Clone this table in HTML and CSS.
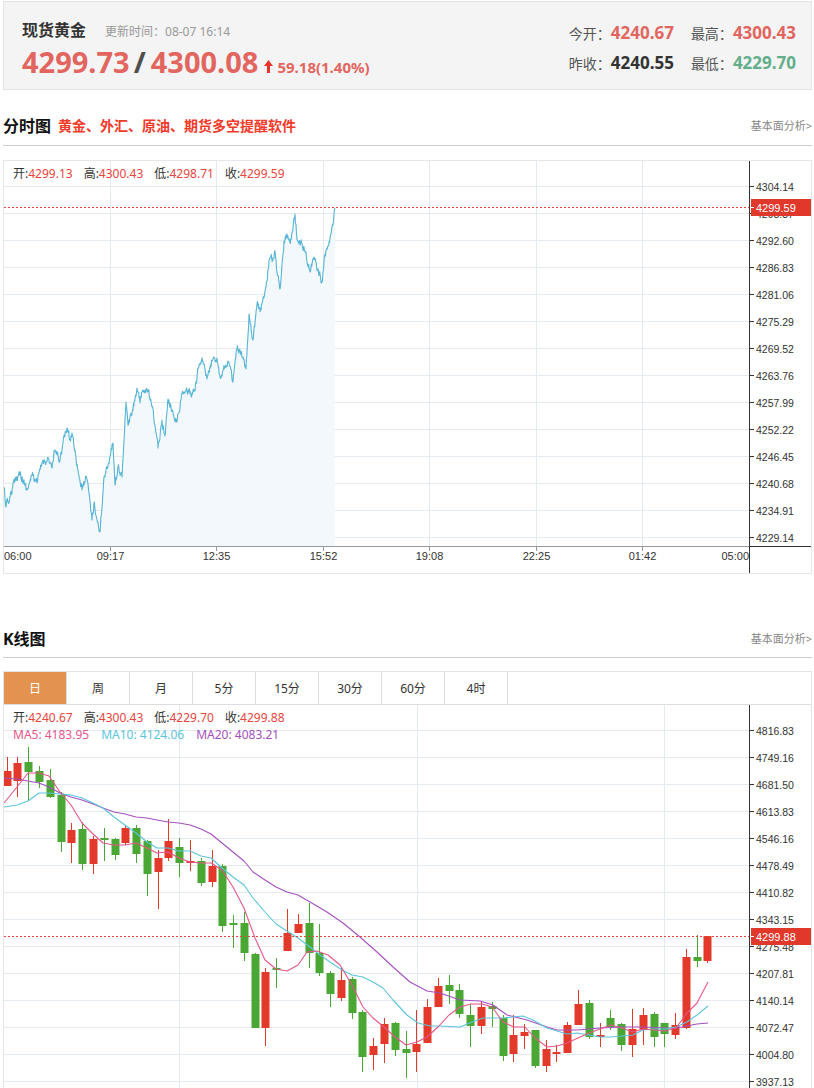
FILE: index.html
```html
<!DOCTYPE html>
<html lang="zh-CN">
<head>
<meta charset="utf-8">
<title>现货黄金</title>
<link rel="stylesheet" href="styles.css">
</head>
<body>
<div class="quote">
  <div class="q-left">
    <div class="q-title"><span class="name">现货黄金</span><span class="time">更新时间：08-07 16:14</span></div>
    <div class="q-price">
      <span class="big up">4299.73</span><span class="slash">/</span><span class="big up">4300.08</span>
      <svg class="arrow" width="9" height="13" viewBox="0 0 9 13"><polygon points="4.5,0 9,6 6,6 6,13 3,13 3,6 0,6"/></svg>
      <span class="chg">59.18(1.40%)</span>
    </div>
  </div>
  <div class="q-right">
    <div class="stat"><span class="lbl">今开：</span><span class="val up">4240.67</span></div>
    <div class="stat"><span class="lbl">最高：</span><span class="val up">4300.43</span></div>
    <div class="stat"><span class="lbl">昨收：</span><span class="val flat">4240.55</span></div>
    <div class="stat"><span class="lbl">最低：</span><span class="val dn">4229.70</span></div>
  </div>
</div>

<div class="sec-head first">
  <span class="sec-title">分时图</span><span class="sec-ad">黄金、外汇、原油、期货多空提醒软件</span><span class="sec-more">基本面分析&gt;</span>
</div>
<div class="tbox">
  <svg id="tchart" class="chart" width="807" height="412" viewBox="4 161 807 412"></svg>
  <div class="info">
    <span class="k">开:</span><span class="v">4299.13</span><span class="k">高:</span><span class="v">4300.43</span><span class="k">低:</span><span class="v">4298.71</span><span class="k">收:</span><span class="v">4299.59</span>
  </div>
</div>

<div class="sec-head second">
  <span class="sec-title">K线图</span><span class="sec-more">基本面分析&gt;</span>
</div>
<div class="kbox">
  <div class="tabs">
    <div class="tab on">日</div>
    <div class="tab">周</div>
    <div class="tab">月</div>
    <div class="tab">5分</div>
    <div class="tab">15分</div>
    <div class="tab">30分</div>
    <div class="tab">60分</div>
    <div class="tab">4时</div>
  </div>
  <div class="kchart">
    <svg id="kchart" class="chart" width="807" height="390" viewBox="4 705 807 390"></svg>
    <div class="info kinfo">
      <div><span class="k">开:</span><span class="v">4240.67</span><span class="k">高:</span><span class="v">4300.43</span><span class="k">低:</span><span class="v">4229.70</span><span class="k">收:</span><span class="v">4299.88</span></div>
      <div><span class="ma5">MA5: 4183.95</span><span class="ma10">MA10: 4124.06</span><span class="ma20">MA20: 4083.21</span></div>
    </div>
  </div>
</div>
<script src="script.js"></script>
</body>
</html>
```

FILE: styles.css
```css
* { box-sizing: border-box; }
html, body { margin: 0; padding: 0; }
body {
  width: 814px;
  background: #fff;
  color: #333;
  font-family: "Noto Sans", "Noto Sans CJK SC", sans-serif;
}

/* quote header */
.quote {
  margin: 1px 2px 0 3px;
  height: 89px;
  background: #f4f4f4;
  border: 1px solid #e4e4e4;
  display: flex;
  justify-content: space-between;
  padding: 0 15px 0 18px;
}
.q-left { padding-top: 16px; }
.q-title { display: flex; align-items: baseline; height: 24px; line-height: 24px; }
.name { font-size: 16px; font-weight: 700; color: #333; }
.time { font-size: 12px; color: #999; margin-left: 19px; }
.q-price { display: flex; align-items: baseline; line-height: 36px; margin-top: 2px; }
.big { font-size: 29px; font-weight: 700; }
.slash { font-size: 29px; font-weight: 700; color: #4f4f4f; margin: 0 5px 0 4px; }
.arrow { fill: #e8332a; margin: 0 4px 0 6px; }
.chg { font-size: 15px; font-weight: 700; color: #e2665f; }
.up { color: #e2665f; }
.dn { color: #64ae8c; }
.flat { color: #333; }

.q-right {
  display: grid;
  grid-template-columns: auto auto;
  grid-auto-rows: 30px;
  column-gap: 17px;
  align-items: center;
  padding-top: 15px;
}
.stat { white-space: nowrap; display: flex; align-items: baseline; }
.lbl { font-size: 14px; color: #555; }
.val { font-size: 17px; font-weight: 700; }

/* section headings */
.sec-head {
  display: flex;
  align-items: center;
  height: 56px;
  margin: 0 2px 0 3px;
  border-bottom: 1px solid #cfcfcf;
}
.sec-head.first { padding: 17px 0 2px 0; height: 56px; }
.sec-head.second { margin-top: 28px; padding: 18px 0 1px 0; height: 56px; }
.sec-title { font-size: 16px; font-weight: 700; color: #111; }
.sec-ad { font-size: 14px; font-weight: 700; color: #f23a2a; margin-left: 7px; }
.sec-more { margin-left: auto; font-size: 11px; color: #888; white-space: nowrap; }

/* time-share chart */
.tbox {
  position: relative;
  margin: 14px 2px 0 3px;
  height: 414px;
  border: 1px solid #e6e6e6;
}
.chart { display: block; }
.info {
  position: absolute;
  left: 9px;
  top: 4px;
  font-size: 12px;
  line-height: 17px;
  white-space: nowrap;
}
.info .k { color: #333; }
.info .v { color: #e8453c; margin-right: 11px; }

/* k-line chart */
.kbox {
  margin: 13px 2px 0 3px;
  border: 1px solid #e4e4e4;
  border-bottom: none;
}
.tabs { display: flex; height: 33px; border-bottom: 1px solid #ddd; }
.tab {
  width: 63px;
  border-right: 1px solid #ddd;
  display: flex;
  align-items: center;
  justify-content: center;
  font-size: 12px;
  color: #333;
}
.tab.on { background: #e3924f; color: #fff; }
.kchart { position: relative; }
.kinfo { top: 4px; }
.ma5 { color: #e5568a; margin-right: 12px; }
.ma10 { color: #5cc4dc; margin-right: 12px; }
.ma20 { color: #a550c0; }

/* svg parts */
.grid line { stroke: #e4ebf0; stroke-width: 1; }
.axis-lbl { font-family: "Liberation Sans", sans-serif; font-size: 10.5px; fill: #333; }
.time-lbl { font-family: "Liberation Sans", sans-serif; font-size: 11px; fill: #333; }
.price-lbl { font-family: "Liberation Sans", sans-serif; font-size: 11px; fill: #fff; }
```

FILE: script.js
```js
(function () {
  var NS = 'http://www.w3.org/2000/svg';
  function el(p, tag, a, txt) {
    var e = document.createElementNS(NS, tag);
    for (var k in a) e.setAttribute(k, a[k]);
    if (txt != null) e.textContent = txt;
    p.appendChild(e);
    return e;
  }
  function pl(pts) {
    return pts.map(function (p) { return p[0].toFixed(1) + ',' + p[1].toFixed(1); }).join(' ');
  }
  function yAxis(svg, y0, labels, top, bottom, priceY, priceTxt) {
    el(svg, 'line', { x1: 749.5, x2: 749.5, y1: top, y2: bottom, stroke: '#333', 'stroke-width': 1 });
    labels.forEach(function (t, i) {
      var y = y0 + 27 * i + 0.5;
      el(svg, 'line', { x1: 749, x2: 754, y1: y, y2: y, stroke: '#333', 'stroke-width': 1 });
      el(svg, 'text', { x: 756, y: y + 4, 'class': 'axis-lbl' }, t);
    });
    el(svg, 'line', { x1: 4, x2: 749, y1: priceY, y2: priceY, stroke: '#e5453a', 'stroke-width': 1, 'stroke-dasharray': '2 2' });
    el(svg, 'rect', { x: 751, y: priceY - 8.5, width: 61, height: 17, fill: '#e0392b' });
    el(svg, 'line', { x1: 751, x2: 754, y1: priceY, y2: priceY, stroke: '#fff', 'stroke-width': 1 });
    el(svg, 'text', { x: 756, y: priceY + 4, 'class': 'price-lbl' }, priceTxt);
  }

  /* ---------- time-share chart ---------- */
  var s1 = document.getElementById('tchart');
  var g1 = el(s1, 'g', { 'class': 'grid' });
  var labels1 = ['4304.14', '4298.37', '4292.60', '4286.83', '4281.06', '4275.29', '4269.52', '4263.76', '4257.99', '4252.22', '4246.45', '4240.68', '4234.91', '4229.14'];
  labels1.forEach(function (t, i) { var y = 186 + 27 * i + 0.5; el(g1, 'line', { x1: 4, x2: 749, y1: y, y2: y }); });
  var vx = [110.5, 216.5, 323.5, 429.5, 536.5, 642.5];
  vx.forEach(function (x) { el(g1, 'line', { x1: x, x2: x, y1: 161, y2: 546 }); });

  var key = [[4,487],[6,507],[10,497],[15,480],[20,472],[27,490],[32,475],[37,483],[42,463],[48,458],[52,468],[55,450],[60,460],[63,443],[67,428],[70,440],[72,433],[75,450],[78,470],[82,490],[86,477],[89,493],[92,520],[94,503],[97,520],[100,532],[104,477],[107,467],[110,457],[113,443],[115,485],[118,467],[122,477],[124,440],[126,402],[128,425],[132,413],[137,388],[140,403],[143,390],[148,391],[152,407],[155,425],[158,448],[162,420],[165,436],[168,399],[172,410],[177,422],[182,394],[187,391],[192,393],[195,391],[198,368],[203,361],[207,379],[212,361],[217,358],[220,376],[223,370],[228,361],[233,382],[237,348],[242,357],[246,369],[249,314],[253,340],[257,304],[261,310],[266,287],[269,261],[273,258],[275,251],[277,272],[280,289],[284,241],[287,234],[290,243],[293,228],[295,214],[297,239],[302,243],[306,252],[310,272],[314,257],[318,269],[322,282],[325,254],[330,238],[333,225],[335,208]];
  var seed = 12345;
  function rnd() { seed = (seed * 16807) % 2147483647; return seed / 2147483647; }
  var pts = [], off = 0;
  for (var i = 0; i < key.length - 1; i++) {
    var a = key[i], b = key[i + 1];
    var n = Math.max(1, Math.round((b[0] - a[0]) / 0.45));
    for (var j = 0; j < n; j++) {
      var t = j / n;
      var y = a[1] + (b[1] - a[1]) * t;
      if (j > 0) { off = off * 0.45 + (rnd() - 0.5) * 7; y += off; } else { off = 0; }
      pts.push([a[0] + (b[0] - a[0]) * t, y]);
    }
  }
  pts.push(key[key.length - 1]);
  var area = pts.concat([[335, 546], [4, 546]]);
  el(s1, 'polygon', { points: pl(area), fill: '#f3f8fc' });
  el(s1, 'polyline', { points: pl(pts), fill: 'none', stroke: '#56b4d4', 'stroke-width': 1.1, 'stroke-linejoin': 'round' });

  // x axis
  el(s1, 'line', { x1: 4, x2: 749, y1: 546.5, y2: 546.5, stroke: '#9a9a9a', 'stroke-width': 1 });
  el(s1, 'line', { x1: 749, x2: 811, y1: 546.5, y2: 546.5, stroke: '#333', 'stroke-width': 1 });
  vx.forEach(function (x) { el(s1, 'line', { x1: x, x2: x, y1: 546, y2: 551, stroke: '#9a9a9a', 'stroke-width': 1 }); });
  var times = ['09:17', '12:35', '15:52', '19:08', '22:25', '01:42'];
  el(s1, 'text', { x: 4, y: 560, 'class': 'time-lbl' }, '06:00');
  times.forEach(function (tt, i) { el(s1, 'text', { x: vx[i], y: 560, 'text-anchor': 'middle', 'class': 'time-lbl' }, tt); });
  el(s1, 'text', { x: 749, y: 560, 'text-anchor': 'end', 'class': 'time-lbl' }, '05:00');
  yAxis(s1, 186, labels1, 161, 573, 207.5, '4299.59');

  /* ---------- K-line chart ---------- */
  var s2 = document.getElementById('kchart');
  var g2 = el(s2, 'g', { 'class': 'grid' });
  var labels2 = ['4816.83', '4749.16', '4681.50', '4613.83', '4546.16', '4478.49', '4410.82', '4343.15', '4275.48', '4207.81', '4140.14', '4072.47', '4004.80', '3937.13'];
  labels2.forEach(function (t, i) { var y = 730 + 27 * i + 0.5; el(g2, 'line', { x1: 4, x2: 749, y1: y, y2: y }); });
  [179.5, 417.5, 664.5].forEach(function (x) { el(g2, 'line', { x1: x, x2: x, y1: 705, y2: 1095 }); });

  var defs = el(s2, 'defs', {});
  var cp = el(defs, 'clipPath', { id: 'kclip' });
  el(cp, 'rect', { x: 4, y: 705, width: 745, height: 390 });
  var gc = el(s2, 'g', { 'clip-path': 'url(#kclip)' });

  var C = [
    [771,786,757,786,'r'],[763,781,757,797,'r'],[762,772,747,800,'g'],[771,782,766,788,'g'],[780,797,769,798,'g'],
    [795,842,792,852,'g'],[830,843,823,863,'r'],[829,864,822,870,'g'],[839,864,836,874,'r'],[838,840,828,861,'g'],
    [839,855,838,860,'g'],[828,843,825,845,'r'],[828,854,825,863,'g'],[841,874,840,896,'g'],[858,872,850,909,'r'],
    [841,858,819,861,'r'],[847,863,838,877,'g'],[861,863,840,871,'r'],[861,883,858,886,'g'],[866,882,850,887,'r'],
    [866,926,864,932,'g'],[923,925,915,948,'g'],[923,953,912,961,'g'],[954,1028,953,1028,'g'],[972,1028,968,1046,'r'],
    [968,970,958,988,'g'],[933,951,909,951,'r'],[924,933,914,933,'r'],[923,953,903,968,'g'],[953,973,924,976,'g'],
    [973,994,971,1007,'g'],[980,998,968,1001,'r'],[979,1013,977,1019,'g'],[1012,1057,1010,1072,'g'],[1046,1055,1038,1070,'r'],
    [1024,1044,1018,1063,'r'],[1023,1050,1022,1056,'g'],[1049,1053,1031,1078,'g'],[1044,1052,1010,1072,'r'],[1007,1043,999,1043,'r'],
    [986,1007,978,1007,'r'],[985,991,975,1004,'g'],[990,1014,984,1018,'g'],[1015,1026,1004,1047,'g'],[1007,1026,1002,1034,'r'],
    [1006,1009,1002,1027,'g'],[1018,1056,1015,1061,'g'],[1035,1054,1015,1062,'r'],[1032,1036,1024,1049,'r'],[1030,1066,1030,1068,'g'],
    [1049,1066,1040,1072,'r'],[1052,1054,1045,1062,'r'],[1025,1053,1022,1053,'r'],[1004,1025,990,1025,'r'],[1003,1037,1000,1039,'g'],
    [1035,1037,1023,1047,'r'],[1018,1027,1010,1030,'g'],[1024,1045,1023,1051,'g'],[1029,1045,1009,1057,'r'],[1015,1030,1008,1045,'r'],
    [1014,1037,1012,1047,'g'],[1023,1034,1023,1047,'g'],[1025,1035,1013,1039,'r'],[957,1028,949,1029,'r'],[957,961,935,967,'g'],
    [936,961,936,963,'r']
  ];
  C.forEach(function (c, i) {
    var cx = Math.round(6.7 + 10.78 * i);
    var col = c[4] === 'r' ? '#e2392a' : '#4aa734';
    el(gc, 'line', { x1: cx + 0.5, x2: cx + 0.5, y1: c[2], y2: c[3], stroke: col, 'stroke-width': 1 });
    el(gc, 'rect', { x: cx - 3.5, y: c[0], width: 8, height: Math.max(1.5, c[1] - c[0]), fill: col });
  });

  var ma5 = [[4,803],[17,787],[28,773],[39,773],[49,776],[60,792],[71,805],[82,823],[93,834],[103,843],[114,845],[125,845],[136,843],[147,848],[157,853],[168,852],[179,858],[190,862],[201,863],[211,863],[222,870],[233,887],[244,908],[255,938],[265,960],[276,969],[287,971],[298,965],[307,952],[317,951],[328,955],[340,965],[352,985],[363,1007],[373,1018],[384,1027],[395,1037],[406,1045],[417,1042],[427,1037],[438,1027],[449,1015],[460,1007],[471,1004],[482,1004],[492,1007],[503,1022],[514,1027],[525,1027],[535,1038],[547,1047],[557,1046],[567,1043],[578,1038],[589,1033],[600,1029],[611,1025],[622,1028],[633,1032],[643,1029],[654,1030],[665,1031],[676,1028],[687,1013],[697,1003],[708,982]];
  var ma10 = [[4,807],[17,805],[28,801],[39,793],[49,793],[60,794],[71,795],[82,798],[93,803],[103,808],[114,817],[125,825],[136,833],[147,842],[157,848],[168,848],[179,851],[190,851],[201,856],[211,858],[222,868],[233,877],[244,885],[253,898],[265,912],[276,924],[287,931],[298,938],[310,947],[320,955],[330,962],[342,970],[352,975],[363,977],[373,982],[383,988],[393,1000],[407,1015],[418,1023],[430,1026],[440,1026],[460,1027],[472,1022],[483,1018],[493,1018],[503,1018],[513,1017],[523,1016],[533,1020],[547,1028],[557,1031],[567,1034],[577,1033],[589,1035],[600,1037],[611,1037],[622,1036],[633,1035],[643,1030],[654,1029],[665,1029],[676,1027],[687,1022],[697,1015],[708,1006]];
  var ma20 = [[4,778],[17,779],[28,781],[39,783],[49,787],[60,793],[71,797],[82,800],[93,804],[103,808],[114,812],[125,814],[136,817],[147,818],[157,820],[168,822],[179,823],[190,825],[201,829],[211,834],[222,843],[233,852],[244,861],[253,872],[265,880],[276,887],[287,892],[298,895],[310,902],[327,912],[343,923],[360,937],[377,952],[393,967],[410,982],[427,991],[440,993],[460,1000],[480,1001],[493,1005],[507,1015],[527,1020],[547,1027],[557,1030],[577,1030],[600,1028],[623,1027],[643,1027],[665,1028],[677,1028],[687,1026],[697,1024],[708,1023]];
  [[ma20, '#a550c0'], [ma10, '#5cc4dc'], [ma5, '#e5568a']].forEach(function (m) {
    el(gc, 'polyline', { points: pl(m[0]), fill: 'none', stroke: m[1], 'stroke-width': 1.1, 'stroke-linejoin': 'round' });
  });

  yAxis(s2, 730, labels2, 705, 1095, 936.5, '4299.88');
})();
```
